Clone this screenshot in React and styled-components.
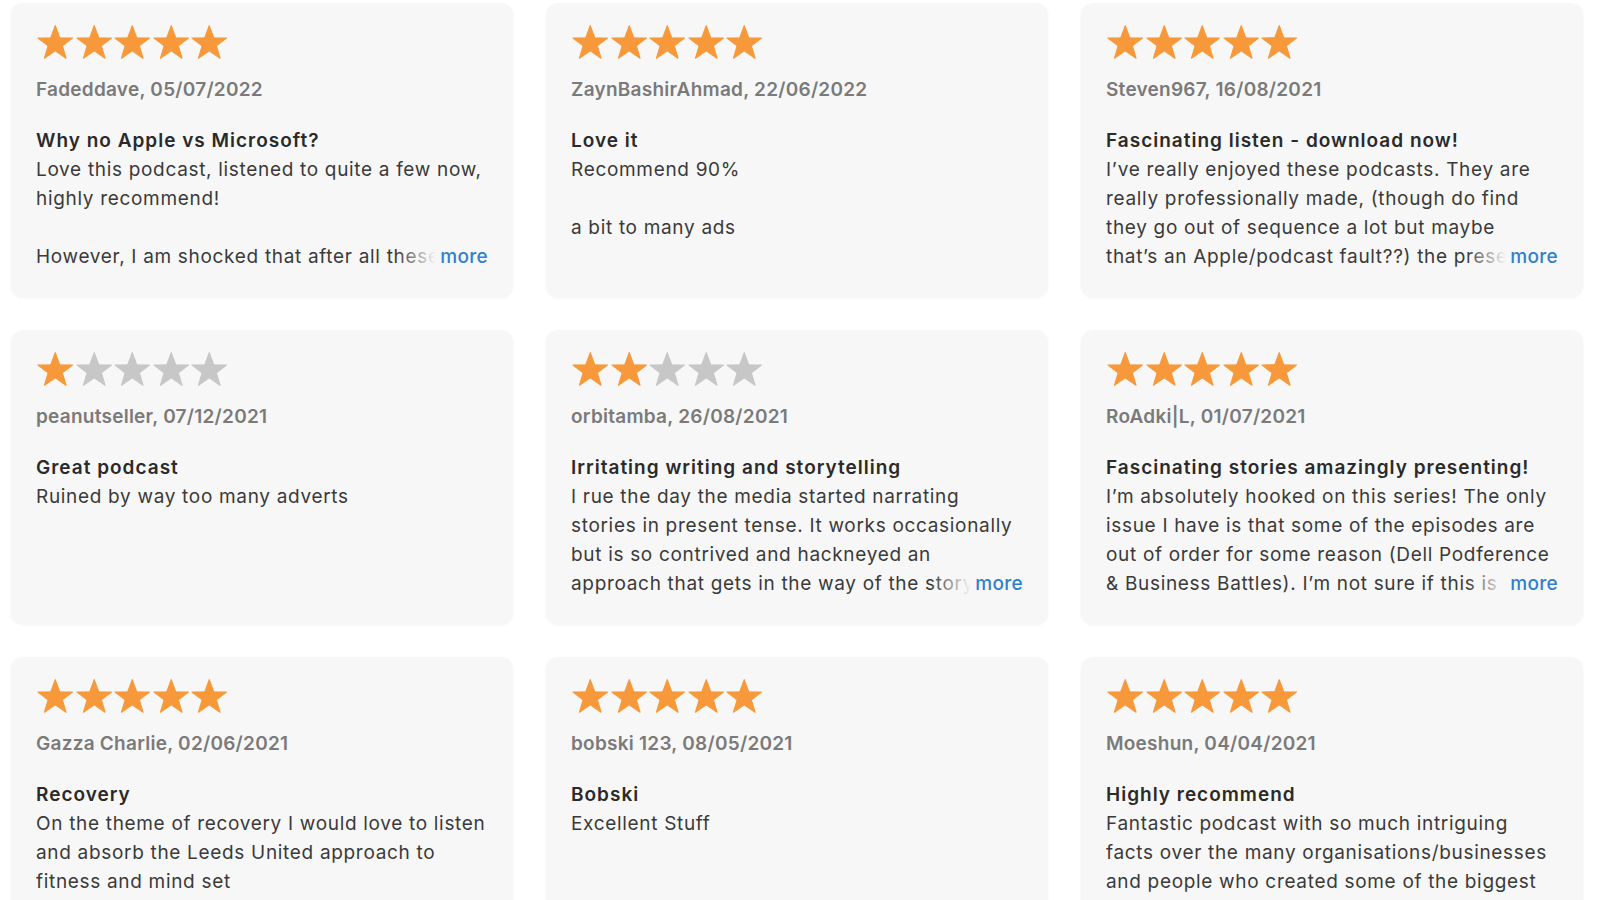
import styled, { createGlobalStyle } from 'styled-components';

const GlobalStyle = createGlobalStyle`
  * { box-sizing: border-box; }
  body {
    margin: 0;
    background: #ffffff;
    font-family: Inter, "Noto Sans", "Liberation Sans", sans-serif;
    -webkit-font-smoothing: antialiased;
  }
`;

const reviews = [
  {
    rating: 5,
    author: 'Fadeddave, 05/07/2022',
    title: 'Why no Apple vs Microsoft?',
    body: 'Love this podcast, listened to quite a few now, highly recommend!\n\nHowever, I am shocked that after all these episodes there has been no mention of the greatest rivalry of them all.',
    more: true,
  },
  {
    rating: 5,
    author: 'ZaynBashirAhmad, 22/06/2022',
    title: 'Love it',
    body: 'Recommend 90%\n\na bit to many ads',
  },
  {
    rating: 5,
    author: 'Steven967, 16/08/2021',
    title: 'Fascinating listen - download now!',
    body: 'I’ve really enjoyed these podcasts. They are really professionally made, (though do find they go out of sequence a lot but maybe\nthat’s an Apple/podcast fault??) the presenters are great and the stories gripping.',
    more: true,
  },
  {
    rating: 1,
    author: 'peanutseller, 07/12/2021',
    title: 'Great podcast',
    body: 'Ruined by way too many adverts',
  },
  {
    rating: 2,
    author: 'orbitamba, 26/08/2021',
    title: 'Irritating writing and storytelling',
    body: 'I rue the day the media started narrating stories in present tense. It works occasionally but is so contrived and hackneyed an approach that gets in the way of the story being told.',
    more: true,
  },
  {
    rating: 5,
    author: 'RoAdki|L, 01/07/2021',
    title: 'Fascinating stories amazingly presenting!',
    body: 'I’m absolutely hooked on this series! The only issue I have is that some of the episodes are out of order for some reason (Dell Podference & Business Battles). I’m not sure if this is intentional or not.',
    more: true,
  },
  {
    rating: 5,
    author: 'Gazza Charlie, 02/06/2021',
    title: 'Recovery',
    body: 'On the theme of recovery I would love to listen and absorb the Leeds United approach to fitness and mind set',
  },
  {
    rating: 5,
    author: 'bobski 123, 08/05/2021',
    title: 'Bobski',
    body: 'Excellent Stuff',
  },
  {
    rating: 5,
    author: 'Moeshun, 04/04/2021',
    title: 'Highly recommend',
    body: 'Fantastic podcast with so much intriguing\nfacts over the many organisations/businesses and people who created some of the biggest companies in the world today.',
    more: true,
  },
];

function Star({ filled }) {
  return (
    <StarIcon viewBox="0 0 40 38" $filled={filled}>
      <polygon points="20,1.5 24.6,14.1 37.9,14.3 27.4,22.5 31.2,35.3 20,27.7 8.8,35.3 12.6,22.5 2.1,14.3 15.4,14.1" />
    </StarIcon>
  );
}

function Stars({ rating }) {
  return (
    <StarRow>
      {[1, 2, 3, 4, 5].map((n) => (
        <Star key={n} filled={n <= rating} />
      ))}
    </StarRow>
  );
}

export default function App() {
  return (
    <>
      <GlobalStyle />
      <Grid>
        {reviews.map((r) => (
          <Card key={r.author}>
            <Stars rating={r.rating} />
            <Author>{r.author}</Author>
            <Title>{r.title}</Title>
            <Body>
              {r.body}
              {r.more && <More>more</More>}
            </Body>
          </Card>
        ))}
      </Grid>
    </>
  );
}

const Grid = styled.main`
  display: grid;
  grid-template-columns: repeat(3, 502px);
  grid-auto-rows: 294px;
  column-gap: 33px;
  row-gap: 33px;
  padding: 3px 0 0 11px;
`;

const Card = styled.article`
  background: #f7f7f7;
  border-radius: 12px;
  box-shadow: 0 1px 3px rgba(0, 0, 0, 0.05);
  padding: 21px 24px 0 25px;
  display: flex;
  flex-direction: column;
  overflow: hidden;
`;

const StarRow = styled.div`
  display: flex;
  height: 38px;
`;

const StarIcon = styled.svg`
  width: 38.5px;
  height: 37px;
  flex: none;
  fill: ${(p) => (p.$filled ? '#f7993a' : '#c7c7c7')};
  stroke: ${(p) => (p.$filled ? '#f7993a' : '#c7c7c7')};
  stroke-width: 1.2;
  stroke-linejoin: round;
`;

const Author = styled.div`
  margin-top: 13px;
  font-size: 19px;
  line-height: 29px;
  font-weight: 600;
  letter-spacing: 0.25px;
  color: #7a7a7a;
`;

const Title = styled.h3`
  margin: 22px 0 0;
  font-size: 19px;
  line-height: 29px;
  font-weight: 600;
  letter-spacing: 1px;
  color: #2a2a2a;
`;

const Body = styled.p`
  position: relative;
  margin: 0;
  font-size: 19px;
  line-height: 29px;
  font-weight: 400;
  letter-spacing: 0.68px;
  color: #3a3a3a;
  white-space: pre-line;
  max-height: 116px;
  overflow: hidden;
`;

const More = styled.span`
  position: absolute;
  right: 1px;
  bottom: 0;
  padding-left: 44px;
  font-weight: 500;
  letter-spacing: 0.3px;
  color: #2f7fd1;
  background: linear-gradient(to right, rgba(247, 247, 247, 0) 0, #f7f7f7 40px);
`;
